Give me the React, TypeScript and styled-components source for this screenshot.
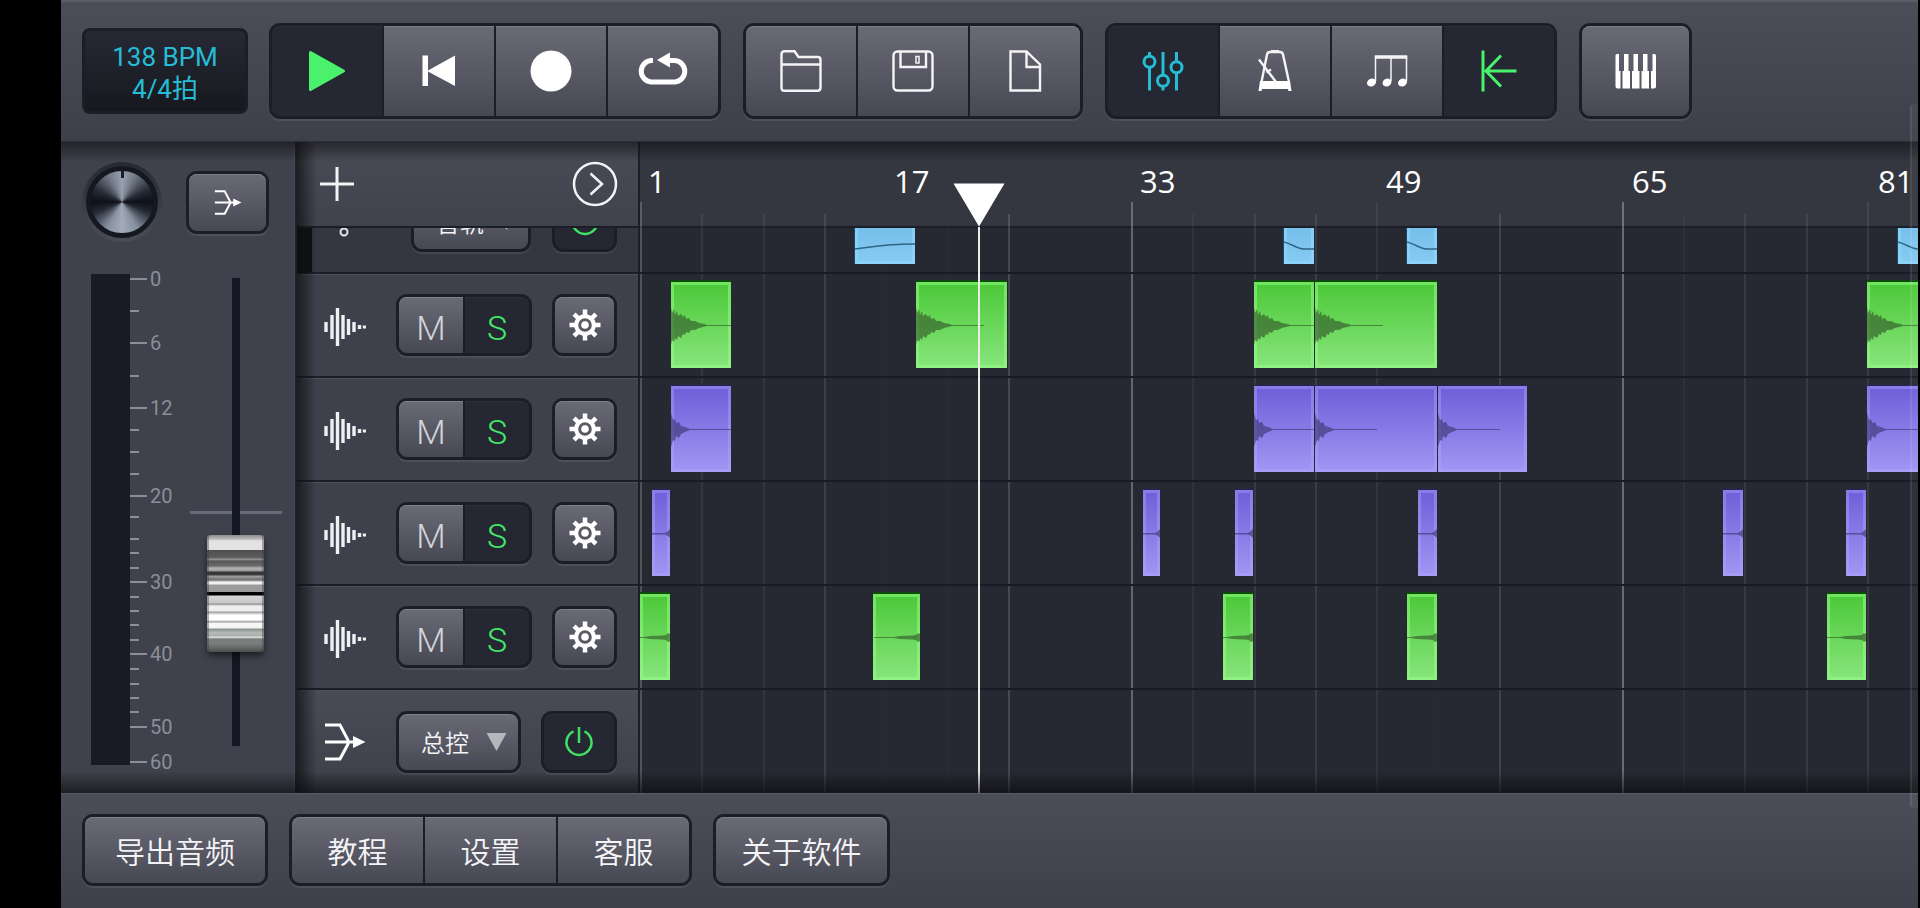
import React from "react";
import styled, { createGlobalStyle, css } from "styled-components";

const INK = "#1b1e29";
const GREEN = "#4af26c";
const CYAN = "#27bcd6";

const GlobalStyle = createGlobalStyle`
  *, *::before, *::after { box-sizing: border-box; }
  body {
    margin: 0;
    background: #000;
    color: #f4f4f6;
    font-family: Roboto, "Noto Sans CJK SC", "Liberation Sans", sans-serif;
  }
  button, select, input { font: inherit; color: inherit; margin: 0; }
  svg { display: block; flex: none; }
`;

/* ---------- page frame ---------- */

const Page = styled.div`
  position: relative;
  display: flex;
  flex-direction: column;
  min-height: 100vh;
  padding: 0 2px 0 61px;
  overflow: hidden;
`;

const barSurface = css`
  background: linear-gradient(#4c4d59, #3d3f49);
  display: flex;
  align-items: center;
  padding: 0 21px;
`;

const Toolbar = styled.header`
  ${barSurface}
  height: 142px;
  padding-bottom: 2px;
  gap: 22px;
  border-top: 2px solid #5a5c68;
  border-bottom: 1px solid #2b2c35;
`;

const BottomBar = styled.footer`
  ${barSurface}
  flex: 1;
  align-items: flex-start;
  padding-top: 20px;
  padding-bottom: 22px;
  gap: 21px;
  border-top: 1px solid #5a5b66;
`;

const Workspace = styled.main`
  position: relative;
  display: flex;
  height: 651px;

  &::after {
    content: "";
    position: absolute;
    inset: 0;
    pointer-events: none;
    background:
      linear-gradient(rgba(16, 15, 18, 0.6), transparent) top / 100% 20px no-repeat,
      linear-gradient(transparent, rgba(8, 8, 10, 0.62)) bottom / 100% 22px no-repeat;
  }
`;

const EdgeHandle = styled.div`
  position: absolute;
  top: 104px;
  right: 2px;
  width: 8px;
  height: 704px;
  border-left: 2px solid rgba(255, 255, 255, 0.08);
  border-radius: 4px 0 0 4px;
  background: rgba(255, 255, 255, 0.04);
  pointer-events: none;
`;

/* ---------- controls ---------- */

const raised = css`
  background: linear-gradient(#696a73, #5a5b67 45%, #464854);
  box-shadow: inset 0 1px 0 #7d7e87;
`;

const sunken = css`
  background: #252832;
  box-shadow: inset 0 1px 0 #2d303b;
`;

const Tempo = styled.button`
  width: 166px;
  height: 86px;
  padding: 4px 0 0;
  margin-right: -1px;
  border: 3px solid ${INK};
  border-radius: 8px;
  background: linear-gradient(#262934, #17181e);
  color: ${CYAN};
  font-size: 26px;
  font-weight: 400;
  line-height: 32px;
  cursor: pointer;

  span { display: block; }
`;

const Group = styled.div`
  display: flex;
  gap: 2px;
  padding: 3px;
  border-radius: 11px;
  background: ${INK};
  box-shadow: 0 2px 0 rgba(255, 255, 255, 0.08);
`;

const Key = styled.button<{ $active?: boolean; $w: number; $h: number }>`
  display: flex;
  align-items: center;
  justify-content: center;
  width: ${(p) => p.$w}px;
  height: ${(p) => p.$h}px;
  padding: 0;
  border: 0;
  cursor: pointer;
  ${(p) => (p.$active ? sunken : raised)}

  &:first-child { border-top-left-radius: 8px; border-bottom-left-radius: 8px; }
  &:last-child { border-top-right-radius: 8px; border-bottom-right-radius: 8px; }
`;

const TextKey = styled(Key)`
  font-family: "Noto Sans CJK SC", sans-serif;
  font-size: 30px;
  font-weight: 350;
  line-height: 40px;
`;

const Letter = styled(Key)`
  padding-top: 5px;
  color: ${(p) => (p.$active ? "#42ea69" : "#d3d4d8")};
  font-size: 34px;
  font-weight: 300;
  line-height: 40px;
`;

const SelectBox = styled.div<{ $w: number }>`
  position: relative;
  width: ${(p) => p.$w}px;
  border-radius: 11px;
  box-shadow: 0 2px 0 rgba(255, 255, 255, 0.08);

  svg {
    position: absolute;
    right: 14px;
    top: 22px;
    pointer-events: none;
  }
`;

const Select = styled.select`
  ${raised}
  appearance: none;
  display: block;
  width: 100%;
  height: 62px;
  padding: 0 0 0 22px;
  border: 3px solid ${INK};
  border-radius: 11px;
  font-family: "Noto Sans CJK SC", sans-serif;
  font-size: 24px;
  font-weight: 350;
  cursor: pointer;
`;

/* ---------- mixer ---------- */

const Mixer = styled.section`
  width: 234px;
  padding: 20px 12px 0 21px;
  background: #3f424c;
  border-right: 1px solid #4a4c56;
`;

const MixerTop = styled.div`
  display: flex;
  align-items: center;
  gap: 24px;
  height: 80px;
`;

const KnobLabel = styled.label`
  display: block;
  position: relative;
  width: 80px;
  height: 80px;
  padding: 4px;
  border-radius: 50%;
  background: linear-gradient(#262932, #4a4d57);

  input {
    position: absolute;
    inset: 0;
    width: 100%;
    height: 100%;
    opacity: 0;
  }
`;

const KnobFace = styled.div`
  width: 72px;
  height: 72px;
  border: 5px solid #141821;
  border-radius: 50%;
  background:
    linear-gradient(#1a1f2a, #1a1f2a) top / 3px 7px no-repeat,
    conic-gradient(#98a1ae, #757d8b 25deg, #252a35 65deg, #0d1017 90deg, #252a35 112deg,
      #8791a0 150deg, #a3abb8 180deg, #8791a0 210deg, #252a35 248deg, #0d1017 270deg,
      #252a35 295deg, #757d8b 335deg, #98a1ae);
`;

const MixerBody = styled.div`
  display: flex;
  align-items: flex-start;
  padding: 26px 0 0 9px;
`;

const Meter = styled.div`
  width: 40px;
  height: 491px;
  margin-top: 6px;
  background: #181b26;
`;

const ScaleText = styled.text`
  font-family: Roboto, sans-serif;
  font-size: 20px;
  fill: #8b8e99;
`;

const Fader = styled.input`
  appearance: none;
  writing-mode: vertical-lr;
  direction: rtl;
  width: 92px;
  height: 468px;
  margin: 10px 0 0 4px;
  background: none;
  cursor: pointer;

  &::-webkit-slider-runnable-track {
    width: 92px;
    height: 100%;
    background:
      linear-gradient(#141724, #141724) center / 8px 100% no-repeat,
      linear-gradient(#686b78, #686b78) center / 92px 3px no-repeat;
  }

  &::-webkit-slider-thumb {
    appearance: none;
    width: 57px;
    height: 117px;
    margin-left: 17px;
    border: 0;
    border-radius: 3px;
    box-shadow: 0 4px 6px rgba(0, 0, 0, 0.5), inset 2px 0 0 rgba(60, 60, 60, 0.4),
      inset -2px 0 0 rgba(60, 60, 60, 0.4);
    background: linear-gradient(
      #8d8d8d 0, #b9b8b9 4px, #e4e2e4 6px, #e4e2e4 15px, #4e4e4e 15px, #5e5e5e 23px,
      #a0a0a0 24px, #585858 26px, #6b6b6b 31px, #b5b5b5 33px, #9a9a9a 36px, #333 37px,
      #3d3d3d 40px, #a2a2a2 41px, #6e6e6e 45px, #f0f0f0 47px, #f0f0f0 49px, #9b9b9b 50px,
      #9b9b9b 57px, #000 57px, #000 60px, #d6d6d6 61px, #c8c8c8 68px, #8e8e8e 69px,
      #f0f0f0 71px, #ececec 76px, #999 77px, #fff 80px, #fff 85px, #999 87px, #f6f6f6 88px,
      #f6f6f6 93px, #8b8f8c 94px, #b9bdba 98px, #a8aaa9 101px, #eee 102px, #7b7d7c 104px,
      #7b7d7c 109px, #4d4d4d 117px
    );
  }
`;

/* ---------- track list ---------- */

const Tracks = styled.section`
  position: relative;
  width: 345px;
  border-left: 2px solid #1c1e26;
  border-right: 2px solid ${INK};
  background: #3e414b;

  &::before {
    content: "";
    position: absolute;
    inset: 0 auto 0 0;
    width: 20px;
    background: linear-gradient(90deg, rgba(14, 14, 16, 0.7), transparent);
    pointer-events: none;
  }
`;

const TracksHead = styled.div`
  display: flex;
  align-items: center;
  justify-content: space-between;
  height: 86px;
  padding: 0 20px 0 22px;
  border-bottom: 2px solid ${INK};
  background: linear-gradient(#4a4b56, #40424c);
`;

const IconButton = styled.button`
  display: block;
  padding: 0;
  border: 0;
  background: none;
  cursor: pointer;
`;

const ClippedRow = styled.div`
  display: flex;
  align-items: flex-end;
  height: 46px;
  overflow: hidden;
`;

const TrackRow = styled.div<{ $nested?: boolean; $master?: boolean }>`
  display: flex;
  align-items: center;
  flex: none;
  width: 100%;
  height: 104px;
  padding: 0 21px 0 27px;
  border-bottom: 2px solid ${INK};
  box-shadow: inset 0 1px 0 #4d515c;
  ${(p) =>
    p.$nested &&
    css`
      border-left: 15px solid #0e1016;
      background: #343640;
    `}
  ${(p) =>
    p.$master &&
    css`
      height: 103px;
      border-bottom: 0;
      background: linear-gradient(#494b56, #3d3f49);
    `}

  > svg { margin: ${(p) => (p.$nested || p.$master ? 0 : 4)}px 30px 0 0; }
  > :last-child { margin-left: auto; }
`;

/* ---------- timeline ---------- */

const Timeline = styled.section`
  position: relative;
  flex: 1;
  min-width: 0;
  overflow: hidden;
  background: #262932;
`;

const Ruler = styled.div`
  display: flex;
  height: 86px;
  padding-top: 19px;
  border-bottom: 2px solid ${INK};
  background: #343740;
`;

const RulerMark = styled.div`
  flex: none;
  width: 246px;
  padding-left: 8px;
  font-family: "Open Sans", sans-serif;
  font-size: 31px;
  font-weight: 500;
  line-height: 40px;
  color: #fff;
`;

const GridLine = styled.div<{ $major: boolean; $strength: number }>`
  position: absolute;
  top: ${(p) => (p.$major ? 60 : 72)}px;
  bottom: 0;
  width: 2px;
  background: rgba(176, 172, 168, ${(p) => p.$strength});
`;

const Lane = styled.div<{ $last?: boolean }>`
  position: relative;
  flex: none;
  width: 100%;
  height: 104px;
  border-bottom: ${(p) => (p.$last ? 0 : 2)}px solid #181b26;
`;

type Tone = "green" | "violet" | "blue";

const tones = {
  green: css`
    background: linear-gradient(#4bc838, #88e57c);
    box-shadow: inset 0 0 0 3px rgba(150, 255, 135, 0.5), 0 -2px 0 #0c4a0a;
  `,
  violet: css`
    background: linear-gradient(#6e5ed8, #a196f3);
    box-shadow: inset 0 0 0 3px rgba(180, 170, 255, 0.38), 0 -1px 0 #2a2160;
  `,
  blue: css`
    background: linear-gradient(#5fb0e0, #86cbf3);
    box-shadow: inset 0 0 0 3px rgba(150, 220, 255, 0.5), -1px 0 0 #174a66;
  `,
};

const ClipBox = styled.div<{ $tone: Tone }>`
  position: absolute;
  top: 8px;
  height: 86px;
  overflow: hidden;
  ${(p) => tones[p.$tone]}

  svg { position: absolute; top: 0; }
`;

const Playhead = styled.div`
  position: absolute;
  top: 41px;
  bottom: 0;
  left: 313px;
  width: 52px;
  display: flex;
  flex-direction: column;
  align-items: center;

  &::after {
    content: "";
    flex: 1;
    width: 2px;
    background: #efe9e9;
  }
`;

/* ---------- icons ---------- */

type LineProps = { w?: number; h?: number; sw?: number; color?: string; children?: React.ReactNode };

const Line = ({ w = 42, h = 42, sw = 2.4, color = "#f4f4f6", children }: LineProps) => (
  <svg width={w} height={h} viewBox={`0 0 ${w} ${h}`} fill="none" stroke={color} strokeWidth={sw} aria-hidden="true">
    {children}
  </svg>
);

const Play = () => (
  <Line w={38} color={GREEN} sw={3}>
    <path d="M2.500 2.500V39.500L35.500 21Z" fill={GREEN} strokeLinejoin="round" />
  </Line>
);

const Rewind = () => (
  <Line w={34} h={32} sw={0}>
    <path d="M0.500 0.500H6V15.500L33 0.500V31L6 16.500V31H0.500Z" fill="#fff" />
  </Line>
);

const Record = () => (
  <Line sw={0}>
    <circle cx="21" cy="21" r="20.500" fill="#fff" />
  </Line>
);

const Loop = () => (
  <Line w={52} color="#fff" sw={5}>
    <path d="M16 10.500H14A10.800 10.800 0 0 0 14 32H38A10.800 10.800 0 0 0 38 10.500H31" />
    <path d="M20 10L33 2.500V17.500Z" fill="#fff" stroke="none" />
  </Line>
);

const Folder = () => (
  <Line>
    <path d="M1.500 37.500V4.500Q1.500 1.200 4.500 1.200H14.500L18.500 7H38Q40.500 7 40.500 10V37.500Q40.500 40.800 37.500 40.800H4.500Q1.500 40.800 1.500 37.500ZM1.500 14.500H40.500" />
  </Line>
);

const Save = () => (
  <Line>
    <rect x="1.500" y="1.500" width="39" height="39" rx="4" />
    <path d="M8.500 1.500V17H34V1.500" />
    <path d="M24 6.500H27V13H24Z" strokeWidth="1.500" />
  </Line>
);

const FileIcon = () => (
  <Line>
    <path d="M6.500 1.500H22.500L36 14.500V40.500H6.500ZM22.500 1.500V17H36" />
  </Line>
);

const Sliders = () => (
  <Line color={CYAN} sw={3}>
    <path d="M7.500 2V5.500M7.500 18V40.500M21 2V24.500M21 37V40.500M34.500 2V11M34.500 23.500V40.500" />
    <circle cx="7.500" cy="11.700" r="5.500" />
    <circle cx="21" cy="30.700" r="5.500" />
    <circle cx="34.500" cy="17.200" r="5.500" />
  </Line>
);

const Metronome = () => (
  <Line>
    <path d="M7.500 32L13 4.500Q13.500 2 16 2H26Q28.500 2 29 4.500L35 32M17 1H25" />
    <path d="M5 9.500L22 32M12.500 22.500L17 19.500" />
    <path d="M6 31H36L37.500 41H34.500L34 39H8L7.500 41H4.500Z" fill="#fff" stroke="none" />
  </Line>
);

const Notes = () => (
  <Line>
    <path d="M9.500 31V6M25 31V6M40.500 31V6" strokeWidth="1.500" />
    <path d="M8.800 7H41.200" strokeWidth="3.500" />
    {[5.5, 21, 36.5].map((x) => (
      <ellipse key={x} cx={x} cy="32.500" rx="4.600" ry="3.800" fill="#fff" stroke="none" transform={`rotate(-25 ${x} 32.500)`} />
    ))}
  </Line>
);

const ToStart = () => (
  <Line color={GREEN} sw={3}>
    <path d="M5 0.500V41.500M38.500 21H8M23 5.500L8 21L23 36.500" />
  </Line>
);

const Piano = () => (
  <Line sw={0}>
    <g fill="#fff">
      <path d="M2 4H4V21H5.500V38.500H2.500Q0.500 38.500 0.500 36.500V5.500Q0.500 4 2 4Z" />
      <path d="M9 4H13.500V21H15V38.500H7.500V21H9Z" />
      <path d="M18.500 4H23V21H24.500V38.500H17V21H18.500Z" />
      <path d="M28 4H32.500V21H34V38.500H26.500V21H28Z" />
      <path d="M37.500 4H39.500Q41 4 41 5.500V36.500Q41 38.500 39 38.500H36V21H37.500Z" />
    </g>
  </Line>
);

const Merge = ({ w = 42, h = 38 }: { w?: number; h?: number }) => (
  <svg width={w} height={h} viewBox="0 0 42 38" fill="none" stroke="#fff" strokeWidth="3" aria-hidden="true">
    <path d="M1 2H16L24 17V21L16 36H1M1 19H32" />
    <path d="M29 13L41.500 19L29 25Z" fill="#fff" stroke="none" />
  </svg>
);

const Wave = () => (
  <Line h={40} sw={3.4} color="#f0f0f2">
    {[10, 24, 38, 24, 16, 10, 4, 3].map((len, i) => {
      const x = [2, 8, 13.5, 19, 24.5, 30, 35.5, 40.5][i];
      return <path key={x} d={`M${x} ${20 - len / 2}V${20 + len / 2}`} />;
    })}
  </Line>
);

const Automation = () => (
  <Line h={40} sw={2} color="#e6e6ea">
    <path d="M5 2V26" />
    <circle cx="5" cy="31" r="3.500" />
  </Line>
);

const Gear = () => (
  <Line w={32} h={32}>
    <g stroke="#fff" strokeWidth="4.500">
      {[0, 45, 90, 135].map((a) => (
        <path key={a} d="M16 0.500V6.500M16 25.500V31.500" transform={`rotate(${a} 16 16)`} />
      ))}
    </g>
    <circle cx="16" cy="16" r="8.800" stroke="#fff" strokeWidth="4" />
    <circle cx="16" cy="16" r="3.800" fill="#fff" stroke="none" />
  </Line>
);

const Power = () => (
  <Line w={30} h={32} color="#3fe165" sw={2.5}>
    <path d="M9.500 5.300A12.500 12.500 0 1 0 20.500 5.300M15 1V17" />
  </Line>
);

const Plus = () => (
  <Line w={36} h={36} sw={3}>
    <path d="M18 1V35M1 18H35" />
  </Line>
);

const Next = () => (
  <Line w={46} h={46} sw={2.5}>
    <circle cx="23" cy="23" r="21" />
    <path d="M18.500 12.500L30 23L18.500 33.500" />
  </Line>
);

const Caret = () => (
  <svg width="21" height="18" viewBox="0 0 21 18" fill="#b6b7bc" aria-hidden="true">
    <path d="M0.500 0H20.500L10.500 18Z" />
  </svg>
);

/* ---------- data ---------- */

const SCALE: [number, string][] = [
  [11, "0"], [75, "6"], [140, "12"], [228, "20"], [314, "30"], [386, "40"], [459, "50"], [494, "60"],
];
const MINOR = [43, 108, 162, 184, 206, 249, 271, 285, 300, 329, 343, 357, 372, 401, 416, 430, 444];

/* Eighty bars span 1227 pixels at the current zoom level. */
const barX = (bar: number) => Math.round((bar * 1227) / 80);

const GRID = [
  0.32, 0.11, 0.09, 0.16, 0.02, 0.02, 0.24, 0, 0.46, 0.07, 0.13, 0.15, 0.09, 0.01, 0.2, 0, 0.5, 0.06, 0.12, 0.13, 0.13,
];

type Shape = "hit" | "tick" | "rise" | "swell" | "up" | "down";
type Clip = [number, number, Shape];

const LANES: { tone: Tone; clips: Clip[] }[] = [
  { tone: "blue", clips: [[14, 18, "up"], [42, 44, "down"], [50, 52, "down"], [82, 86, "down"]] },
  { tone: "green", clips: [[2, 6, "hit"], [18, 24, "hit"], [40, 44, "hit"], [44, 52, "hit"], [80, 88, "hit"]] },
  { tone: "violet", clips: [[2, 6, "tick"], [40, 44, "tick"], [44, 52, "tick"], [52, 57.9, "tick"], [80, 88, "tick"]] },
  { tone: "violet", clips: [[0.8, 2, "rise"], [32.8, 34, "rise"], [38.8, 40, "rise"], [50.7, 52, "rise"], [70.6, 72, "rise"], [78.6, 80, "rise"]] },
  { tone: "green", clips: [[0, 2, "swell"], [15.2, 18.3, "swell"], [38, 40, "swell"], [50, 52, "swell"], [77.4, 80, "swell"]] },
];

const SHAPES: Record<Shape, { w: number; right?: boolean; d: string; line?: boolean }> = {
  hit: {
    w: 70,
    d: "M0 25L1 31L3 27L4 33L6 29L7 34L10 32L12 35L14 33L15 37L18 36L20 39L24 39L28 41L34 42L36 43L68 43V44L36 44L28 46L24 48L20 48L18 51L15 50L14 53L12 52L10 56L7 54L6 58L4 56L3 60L1 58L0 63Z",
  },
  tick: {
    w: 64,
    d: "M0 27L2 34L4 33L5 37L8 36L10 40L14 41L19 43L62 43V44L19 44L14 46L10 48L8 52L5 50L4 55L2 54L0 61Z",
  },
  rise: { w: 30, right: true, d: "M0 43H25L28 41L30 39V48L28 46L25 44.500H0Z" },
  swell: { w: 48, right: true, d: "M2 43H22L28 42L40 41.500L44 41L46 39L48 40V47L46 48L44 46L40 45.500L28 45L22 44H2Z" },
  up: { w: 60, line: true, d: "M0 71C14 69 30 66 60 66" },
  down: { w: 30, line: true, d: "M0 64C8 66 14 71 20 71H31" },
};

const ClipView = ({ clip: [from, to, shape], tone }: { clip: Clip; tone: Tone }) => {
  const s = SHAPES[shape];
  const left = barX(from);
  const fill = tone === "green" ? "rgba(48,84,40,.62)" : "rgba(60,50,110,.62)";
  return (
    <ClipBox $tone={tone} style={{ left, width: barX(to) - left - 1 }}>
      <svg
        width={s.w}
        height="86"
        viewBox={`0 0 ${s.w} 86`}
        style={s.right ? { right: 0 } : { left: 0 }}
        fill={s.line ? "none" : fill}
        stroke={s.line ? "#2f6684" : "none"}
        strokeWidth="1.500"
        aria-hidden="true"
      >
        <path d={s.d} />
      </svg>
    </ClipBox>
  );
};

const Lanes = () => (
  <>
    {LANES.map(({ tone, clips }, i) => {
      const lane = (
        <Lane key={i}>
          {clips.map((c) => (
            <ClipView key={c[0]} clip={c} tone={tone} />
          ))}
        </Lane>
      );
      return i === 0 ? <ClippedRow key={i}>{lane}</ClippedRow> : lane;
    })}
    <Lane $last />
  </>
);

const TOOLS: { label: string; icon: React.ReactNode; on?: boolean }[][] = [
  [
    { label: "播放", icon: <Play />, on: true },
    { label: "回到开头", icon: <Rewind /> },
    { label: "录音", icon: <Record /> },
    { label: "循环", icon: <Loop /> },
  ],
  [
    { label: "打开", icon: <Folder /> },
    { label: "保存", icon: <Save /> },
    { label: "新建", icon: <FileIcon /> },
  ],
  [
    { label: "混音器", icon: <Sliders />, on: true },
    { label: "节拍器", icon: <Metronome /> },
    { label: "音符", icon: <Notes /> },
    { label: "跳回起点", icon: <ToStart />, on: true },
  ],
];

export default function App() {
  return (
    <Page>
      <GlobalStyle />
      <Toolbar>
        <Tempo>
          <span>138 BPM</span>
          <span>4/4拍</span>
        </Tempo>
        {TOOLS.map((tools, i) => (
          <Group key={i}>
            {tools.map((t) => (
              <Key key={t.label} $w={110} $h={90} $active={t.on} aria-label={t.label} aria-pressed={!!t.on}>
                {t.icon}
              </Key>
            ))}
          </Group>
        ))}
        <Group>
          <Key $w={107} $h={90} aria-label="键盘">
            <Piano />
          </Key>
        </Group>
      </Toolbar>

      <Workspace>
        <Mixer>
          <MixerTop>
            <KnobLabel>
              <KnobFace />
              <input type="range" min="-50" max="50" defaultValue="0" aria-label="声像" />
            </KnobLabel>
            <Group>
              <Key $w={77} $h={57} aria-label="输出">
                <Merge w={28} h={25} />
              </Key>
            </Group>
          </MixerTop>
          <MixerBody>
            <Meter />
            <svg width="56" height="506" viewBox="0 0 56 506">
              {SCALE.map(([y, label]) => (
                <g key={label}>
                  <path d={`M0 ${y}H17`} stroke="#8b8e99" strokeWidth="2" />
                  <ScaleText x="20" y={y + 7}>{label}</ScaleText>
                </g>
              ))}
              {MINOR.map((y) => (
                <path key={y} d={`M0 ${y}H9`} stroke="#8b8e99" strokeWidth="2" />
              ))}
            </svg>
            <Fader type="range" min="0" max="351" defaultValue="94" aria-label="主音量" />
          </MixerBody>
        </Mixer>

        <Tracks>
          <TracksHead>
            <IconButton aria-label="添加音轨"><Plus /></IconButton>
            <IconButton aria-label="展开"><Next /></IconButton>
          </TracksHead>
          <ClippedRow>
            <TrackRow $nested>
              <Automation />
              <SelectBox $w={120}>
                <Select aria-label="自动化参数" defaultValue="音轨">
                  <option>音轨</option>
                </Select>
                <Caret />
              </SelectBox>
              <Group>
                <Key $w={59} $h={56} $active aria-label="启用自动化"><Power /></Key>
              </Group>
            </TrackRow>
          </ClippedRow>
          {[1, 2, 3, 4].map((n) => (
            <TrackRow key={n}>
              <Wave />
              <Group>
                <Letter $w={64} $h={56}>M</Letter>
                <Letter $w={64} $h={56} $active>S</Letter>
              </Group>
              <Group>
                <Key $w={59} $h={56} aria-label="音轨设置"><Gear /></Key>
              </Group>
            </TrackRow>
          ))}
          <TrackRow $master>
            <Merge />
            <SelectBox $w={125}>
              <Select aria-label="总线" defaultValue="总控">
                <option>总控</option>
              </Select>
              <Caret />
            </SelectBox>
            <Group>
              <Key $w={70} $h={56} $active aria-label="启用总控"><Power /></Key>
            </Group>
          </TrackRow>
        </Tracks>

        <Timeline>
          <Ruler>
            {[1, 17, 33, 49, 65, 81].map((n) => (
              <RulerMark key={n}>{n}</RulerMark>
            ))}
          </Ruler>
          {GRID.map((strength, i) => (
            <GridLine key={i} $major={i % 4 === 0} $strength={strength} style={{ left: barX(i * 4) }} />
          ))}
          <Lanes />
          <Playhead>
            <svg width="52" height="44" viewBox="0 0 52 44" fill="#fff" aria-hidden="true">
              <path d="M0.500 0.500H51.500L26 43.500Z" />
            </svg>
          </Playhead>
        </Timeline>
      </Workspace>

      <BottomBar>
        <Group>
          <TextKey $w={180} $h={66}>导出音频</TextKey>
        </Group>
        <Group>
          <TextKey $w={131} $h={66}>教程</TextKey>
          <TextKey $w={131} $h={66}>设置</TextKey>
          <TextKey $w={131} $h={66}>客服</TextKey>
        </Group>
        <Group>
          <TextKey $w={171} $h={66}>关于软件</TextKey>
        </Group>
      </BottomBar>
      <EdgeHandle />
    </Page>
  );
}
